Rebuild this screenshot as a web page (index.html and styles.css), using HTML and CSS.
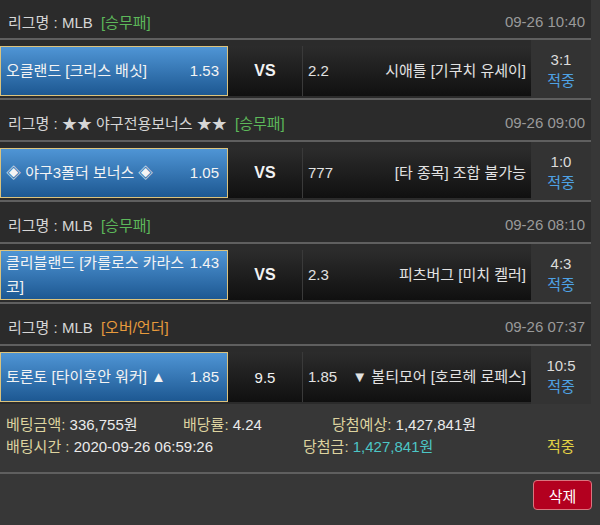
FILE: index.html
```html
<!DOCTYPE html>
<html lang="ko">
<head>
    <meta charset="UTF-8">
    <meta name="viewport" content="width=device-width, initial-scale=1.0">
    <title>배팅내역</title>
    <link rel="stylesheet" href="styles.css">
</head>
<body>
    <div class="list">
        <div class="game">
            <div class="league"><span>리그명 : MLB <span class="type win">[승무패]</span></span><span class="date">09-26 10:40</span></div>
            <div class="match">
                <div class="teams">
                    <div class="home"><span class="name">오클랜드 [크리스 배싯]</span><span class="odds">1.53</span></div>
                    <div class="vs">VS</div>
                    <div class="away"><span class="odds">2.2</span><span class="name">시애틀 [기쿠치 유세이]</span></div>
                </div>
                <div class="result"><span class="score">3:1</span><span class="hit">적중</span></div>
            </div>
        </div>
        <div class="game">
            <div class="league"><span>리그명 : ★★ 야구전용보너스 ★★ <span class="type win">[승무패]</span></span><span class="date">09-26 09:00</span></div>
            <div class="match">
                <div class="teams">
                    <div class="home"><span class="name">◈ 야구3폴더 보너스 ◈</span><span class="odds">1.05</span></div>
                    <div class="vs">VS</div>
                    <div class="away"><span class="odds">777</span><span class="name">[타 종목] 조합 불가능</span></div>
                </div>
                <div class="result"><span class="score">1:0</span><span class="hit">적중</span></div>
            </div>
        </div>
        <div class="game">
            <div class="league"><span>리그명 : MLB <span class="type win">[승무패]</span></span><span class="date">09-26 08:10</span></div>
            <div class="match">
                <div class="teams">
                    <div class="home"><span class="name">클리블랜드 [카를로스 카라스코]</span><span class="odds">1.43</span></div>
                    <div class="vs">VS</div>
                    <div class="away"><span class="odds">2.3</span><span class="name">피츠버그 [미치 켈러]</span></div>
                </div>
                <div class="result"><span class="score">4:3</span><span class="hit">적중</span></div>
            </div>
        </div>
        <div class="game">
            <div class="league"><span>리그명 : MLB <span class="type ou">[오버/언더]</span></span><span class="date">09-26 07:37</span></div>
            <div class="match">
                <div class="teams">
                    <div class="home"><span class="name">토론토 [타이후안 워커] ▲</span><span class="odds">1.85</span></div>
                    <div class="vs line">9.5</div>
                    <div class="away"><span class="odds">1.85</span><span class="name">▼ 볼티모어 [호르헤 로페스]</span></div>
                </div>
                <div class="result"><span class="score">10:5</span><span class="hit">적중</span></div>
            </div>
        </div>
    </div>
    <div class="summary">
        <div class="sum-row">
            <span class="c1"><span class="lbl">베팅금액:</span> 336,755원</span>
            <span class="c2"><span class="lbl">배당률:</span> 4.24</span>
            <span><span class="lbl">당첨예상:</span> 1,427,841원</span>
        </div>
        <div class="sum-row">
            <span class="c3"><span class="lbl">배팅시간 :</span> 2020-09-26 06:59:26</span>
            <span class="c4"><span class="lbl">당첨금:</span> <span class="won">1,427,841원</span></span>
            <span class="state">적중</span>
        </div>
    </div>
    <div class="actions"><button class="btn-del">삭제</button></div>
</body>
</html>
```

FILE: styles.css
```css
body { margin: 0; background: #373737; font-family: "Liberation Sans", "Noto Sans CJK KR", sans-serif; font-size: 15px; color: #e6e6e6; }
.list { width: 591px; }
.game { background: #2b2b2b; }
.league { height: 42px; box-sizing: border-box; padding: 4px 6px 0 8px; display: flex; align-items: center; justify-content: space-between; color: #d6d6d6; border-bottom: 2px solid #5f5f5f; }
.game:first-child .league { height: 40px; }
.type { margin-left: 4px; }
.win { color: #5db85a; }
.ou { color: #e79a3c; }
.date { color: #9a9a9a; }
.match { display: flex; border-bottom: 2px solid #5f5f5f; }
.game:last-child .match { border-bottom: none; }
.teams { width: 531px; display: flex; padding: 6px 0 2px; }
.home, .away { height: 50px; box-sizing: border-box; display: grid; align-content: center; align-items: start; line-height: 24px; }
.home { width: 228px; grid-template-columns: 183px 1fr; padding: 0 8px 0 5px; border: 1px solid #dcc37c; background: linear-gradient(#4f95d5, #1d5892); color: #f4f4f4; }
.home .odds { justify-self: end; }
.away { width: 229px; grid-template-columns: auto 1fr; padding: 0 5px; border-left: 1px solid #3a3a3a; background: linear-gradient(#2c2c2c, #101010); color: #e2e2e2; }
.away .name { text-align: right; }
.vs { width: 74px; height: 50px; display: flex; align-items: center; justify-content: center; background: linear-gradient(#2c2c2c, #101010); font-size: 16px; font-weight: 700; color: #f2f2f2; }
.vs.line { font-weight: 400; font-size: 15px; }
.result { flex: 1; background: #333; display: flex; flex-direction: column; align-items: center; justify-content: center; line-height: 21px; padding-top: 1px; }
.score { color: #dcdcdc; }
.hit { color: #4ea1e4; }
.summary { padding: 10px 0 14px 6px; border-bottom: 2px solid #5f5f5f; line-height: 22px; color: #eaeaea; }
.sum-row { display: flex; }
.lbl { color: #ddd39f; }
.c1 { width: 177px; }
.c2 { width: 149px; }
.c3 { width: 297px; }
.c4 { width: 244px; }
.won { color: #4cc6c6; }
.state { color: #e3d245; }
.actions { display: flex; justify-content: flex-end; padding: 6px 8px 0 0; }
.btn-del { width: 59px; height: 30px; border: 1px solid #d9767f; border-radius: 4px; background: #b3001f; color: #fff; font-family: inherit; font-size: 15px; cursor: pointer; }
```
